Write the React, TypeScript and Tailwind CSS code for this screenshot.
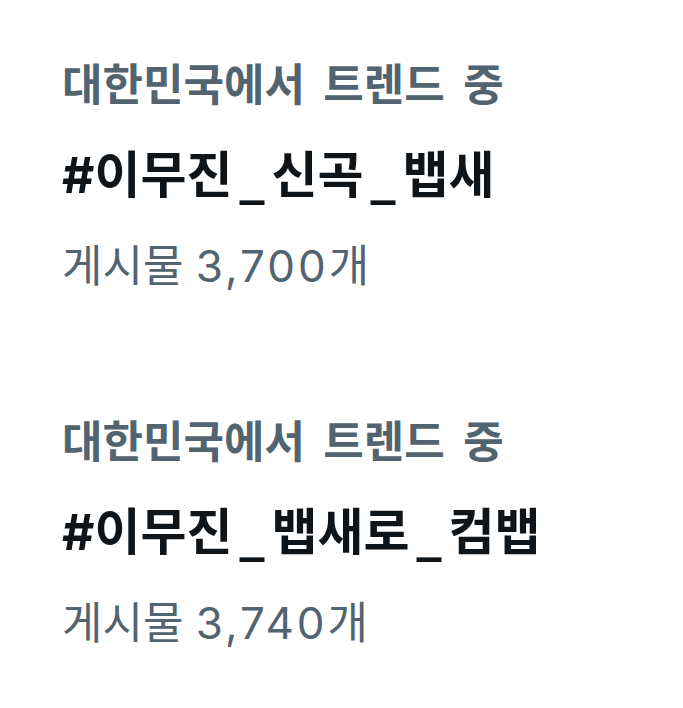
const trends = [
  { place: "대한민국에서 트렌드 중", tag: "#이무진_신곡_뱁새", count: "3,700" },
  { place: "대한민국에서 트렌드 중", tag: "#이무진_뱁새로_컴뱁", count: "3,740" },
];

// wider underscore between the hashtag words
function Hashtag({ tag }: { tag: string }) {
  const parts = tag.split("_");
  return (
    <>
      {parts.map((p, i) => (
        <span key={i}>
          {i > 0 && <span className="mx-[7px] font-['DejaVu_Sans']">_</span>}
          {p}
        </span>
      ))}
    </>
  );
}

function TrendItem({ place, tag, count }: { place: string; tag: string; count: string }) {
  return (
    <div className="flex flex-col">
      <div className="text-[44px] leading-[90px] font-bold text-[#536471] [word-spacing:8px]">{place}</div>
      <div className="text-[50px] leading-[90px] font-bold text-[#0f1419]">
        <Hashtag tag={tag} />
      </div>
      <div className="text-[44px] leading-[90px] text-[#536471]">
        게시물 <span className="tracking-[3px]">{count}</span>개
      </div>
    </div>
  );
}

export default function App() {
  return (
    <div
      className="w-[683px] h-[708px] bg-white px-[62px] pt-[40px] flex flex-col gap-[86px]"
      style={{ fontFamily: 'Inter, "Noto Sans CJK KR", sans-serif' }}
    >
      {trends.map((t, i) => (
        <TrendItem key={i} {...t} />
      ))}
    </div>
  );
}
